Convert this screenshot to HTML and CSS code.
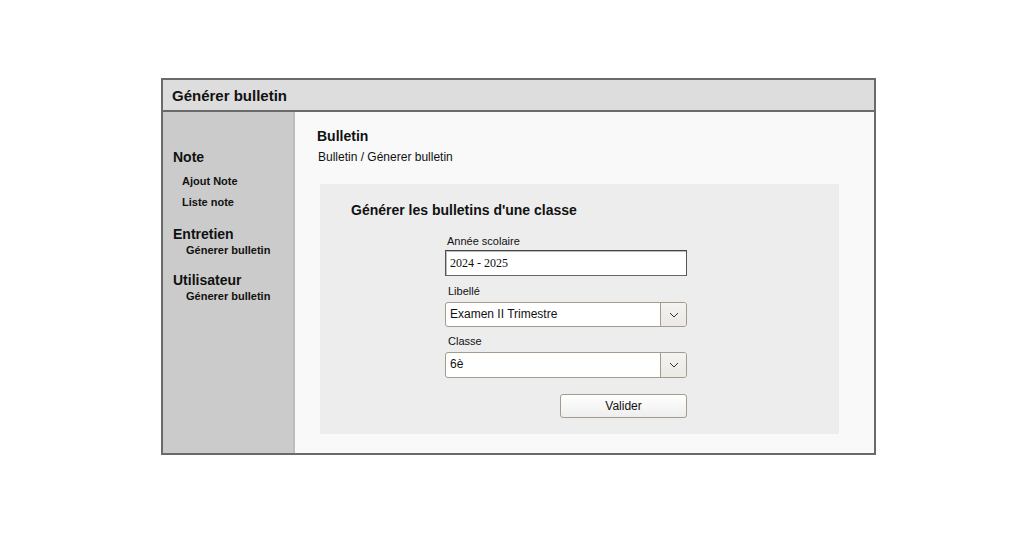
FILE: index.html
```html
<!DOCTYPE html>
<html lang="fr">
<head>
<meta charset="utf-8">
<title>Générer bulletin</title>
<link rel="stylesheet" href="styles.css">
</head>
<body>
<div class="window">
  <div class="titlebar">Générer bulletin</div>
  <div class="body">
    <nav class="sidebar">
      <div class="group g1">
        <div class="group-title">Note</div>
        <div class="item">Ajout Note</div>
        <div class="item">Liste note</div>
      </div>
      <div class="group g2">
        <div class="group-title">Entretien</div>
        <div class="item sub">Génerer bulletin</div>
      </div>
      <div class="group g3">
        <div class="group-title">Utilisateur</div>
        <div class="item sub">Génerer bulletin</div>
      </div>
    </nav>
    <main class="main">
      <div class="page-title">Bulletin</div>
      <div class="breadcrumb">Bulletin / Génerer bulletin</div>
      <section class="card">
        <div class="card-title">Générer les bulletins d'une classe</div>
        <div class="form">
          <div class="label">Année scolaire</div>
          <div class="text-input">2024 - 2025</div>
          <div class="label l2">Libellé</div>
          <div class="select">
            <span class="select-value">Examen II Trimestre</span>
            <span class="select-btn"><svg width="10" height="6" viewBox="0 0 10 6"><path d="M1 1 L5 5 L9 1" fill="none" stroke="#333" stroke-width="1"/></svg></span>
          </div>
          <div class="label l2 l3">Classe</div>
          <div class="select tall">
            <span class="select-value">6è</span>
            <span class="select-btn"><svg width="10" height="6" viewBox="0 0 10 6"><path d="M1 1 L5 5 L9 1" fill="none" stroke="#333" stroke-width="1"/></svg></span>
          </div>
          <div class="actions">
            <button class="btn">Valider</button>
          </div>
        </div>
      </section>
    </main>
  </div>
</div>
</body>
</html>
```
FILE: styles.css
```css
html, body {
  margin: 0;
  padding: 0;
  background: #ffffff;
}
body {
  font-family: "Liberation Sans", Arial, sans-serif;
  color: #111;
}
.window {
  margin: 78px 0 0 161px;
  width: 711px;
  height: 373px;
  border: 2px solid #6a6a6a;
  display: flex;
  flex-direction: column;
}
.titlebar {
  height: 30px;
  line-height: 31px;
  background: #dddddd;
  border-bottom: 2px solid #6a6a6a;
  padding-left: 9px;
  font-size: 15px;
  font-weight: bold;
  color: #111;
}
.body {
  flex: 1;
  display: flex;
}
.sidebar {
  width: 130px;
  background: #cbcbcb;
  border-right: 2px solid #bdbdbd;
  padding-top: 37px;
}
.group-title {
  font-size: 14px;
  font-weight: bold;
  line-height: 16px;
  padding-left: 10px;
  margin-bottom: 2px;
}
.g1 .group-title {
  margin-bottom: 10px;
}
.g1 { margin-bottom: 17px; }
.g2 { margin-bottom: 15px; }
.item {
  font-size: 11px;
  font-weight: bold;
  line-height: 13px;
  padding-left: 19px;
  margin-bottom: 8px;
}
.item:last-child {
  margin-bottom: 0;
}
.item.sub {
  padding-left: 23px;
}
.main {
  flex: 1;
  background: #f9f9f9;
  padding: 16px 0 0 22px;
}
.page-title {
  font-size: 14px;
  font-weight: bold;
  line-height: 16px;
}
.breadcrumb {
  font-size: 12px;
  line-height: 14px;
  margin-top: 6px;
  padding-left: 1px;
}
.card {
  margin: 20px 0 0 3px;
  width: 519px;
  height: 250px;
  background: #ededed;
  box-sizing: border-box;
  padding: 18px 0 0 31px;
}
.card-title {
  font-size: 14px;
  font-weight: bold;
  line-height: 16px;
}
.form {
  margin: 17px 0 0 94px;
  width: 242px;
}
.label {
  font-size: 11px;
  line-height: 13px;
  padding-left: 2px;
  margin-bottom: 2px;
}
.label.l2 {
  padding-left: 3px;
  margin-top: 9px;
  margin-bottom: 4px;
}
.label.l3 {
  margin-top: 8px;
}
.text-input {
  height: 26px;
  box-sizing: border-box;
  border: 1px solid #555;
  border-top-color: #444;
  border-bottom-color: #666;
  box-shadow: inset 1px 1px 0 #bbb;
  background: #fff;
  font-family: "Liberation Serif", "Times New Roman", serif;
  font-size: 12px;
  line-height: 24px;
  padding-left: 4px;
}
.select {
  height: 25px;
  box-sizing: border-box;
  border: 1px solid #a59a8e;
  border-radius: 3px;
  background: #fff;
  display: flex;
  align-items: stretch;
}
.select.tall {
  height: 26px;
}
.select-value {
  flex: 1;
  font-size: 12px;
  line-height: 23px;
  padding-left: 4px;
}
.select-btn {
  width: 25px;
  border-left: 1px solid #a59a8e;
  background: linear-gradient(#f4f3f1, #ebe9e6);
  border-radius: 0 2px 2px 0;
  display: flex;
  align-items: center;
  justify-content: center;
}
.actions {
  display: flex;
  justify-content: flex-end;
  margin-top: 16px;
}
.btn {
  width: 127px;
  height: 24px;
  border: 1px solid #a59a8e;
  border-radius: 3px;
  background: linear-gradient(#ffffff, #eeeeee);
  font-family: "Liberation Sans", Arial, sans-serif;
  font-size: 12px;
  color: #111;
  padding: 0;
}
```
